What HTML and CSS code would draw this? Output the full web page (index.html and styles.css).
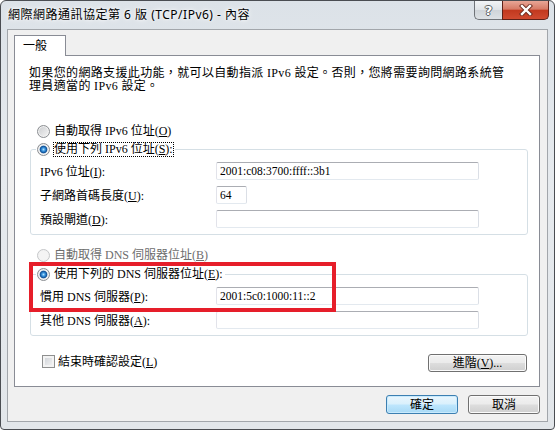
FILE: index.html
```html
<!DOCTYPE html>
<html lang="zh-Hant">
<head>
  <meta charset="UTF-8">
  <title>網際網路通訊協定第 6 版 (TCP/IPv6) - 內容</title>
  <link rel="stylesheet" href="styles.css">
</head>
<body>

  <div class="window">
    <div class="titlebar">
      <div class="title">網際網路通訊協定第 6 版 (TCP/IPv6) - 內容</div>
      <div class="caption-btns">
        <div class="cap-btn help">?</div>
        <div class="cap-btn close">
          <svg width="16" height="12" viewBox="0 0 16 12">
            <path d="M4 2 L12 10 M12 2 L4 10" stroke="#6b2a1e" stroke-width="4.2" stroke-linecap="square"/>
            <path d="M4 2 L12 10 M12 2 L4 10" stroke="#fff" stroke-width="2.4" stroke-linecap="square"/>
          </svg>
        </div>
      </div>
    </div>

    <div class="client">
      <div class="tabs">
        <div class="tab active">一般</div>
      </div>

      <div class="panel">
        <p class="intro">如果您的網路支援此功能，就可以自動指派 IPv6 設定。否則，您將需要詢問網路系統管<br>理員適當的 IPv6 設定。</p>

        <div class="option first">
          <span class="radio"></span>
          <span>自動取得 IPv6 位址(<u>O</u>)</span>
        </div>

        <fieldset class="group">
          <legend class="option">
            <span class="radio on"></span>
            <span class="focus">使用下列 IPv6 位址(<u>S</u>):</span>
          </legend>
          <div class="field-row">
            <span class="field-label">IPv6 位址(<u>I</u>):</span>
            <span class="textbox">2001:c08:3700:ffff::3b1</span>
          </div>
          <div class="field-row">
            <span class="field-label">子網路首碼長度(<u>U</u>):</span>
            <span class="textbox short">64</span>
          </div>
          <div class="field-row">
            <span class="field-label">預設閘道(<u>D</u>):</span>
            <span class="textbox"></span>
          </div>
        </fieldset>

        <div class="option disabled">
          <span class="radio off"></span>
          <span>自動取得 DNS 伺服器位址(<u>B</u>)</span>
        </div>

        <fieldset class="group dns">
          <legend class="option">
            <span class="radio on"></span>
            <span>使用下列的 DNS 伺服器位址(<u>E</u>):</span>
          </legend>
          <div class="field-row">
            <span class="field-label">慣用 DNS 伺服器(<u>P</u>):</span>
            <span class="textbox">2001:5c0:1000:11::2</span>
          </div>
          <div class="field-row">
            <span class="field-label">其他 DNS 伺服器(<u>A</u>):</span>
            <span class="textbox"></span>
          </div>
        </fieldset>

        <div class="panel-footer">
          <div class="check-row">
            <span class="checkbox"></span>
            <span>結束時確認設定(<u>L</u>)</span>
          </div>
          <button class="btn advanced">進階(<u>V</u>)...</button>
        </div>

        <div class="highlight"></div>
      </div>

      <div class="dialog-btns">
        <button class="btn default">確定</button>
        <button class="btn">取消</button>
      </div>
    </div>
  </div>

</body>
</html>
```

FILE: styles.css
```css
body {
  margin: 0;
  font-family: 'Liberation Serif', 'Noto Sans CJK TC', serif;
  font-size: 12px;
  color: #000;
  background: #fff;
}

.window {
  width: 555px;
  height: 430px;
  box-sizing: border-box;
  border: 1px solid #4a4d52;
  border-radius: 6px 6px 4px 4px;
  background: linear-gradient(to bottom, #dce2e8, #e6eaee 40%, #e2e6ea);
  display: flex;
  flex-direction: column;
  overflow: hidden;
}

.titlebar {
  height: 28px;
  display: flex;
  align-items: flex-start;
}

.title {
  font-family: 'Noto Sans', 'Noto Sans CJK TC', sans-serif;
  font-size: 12px;
  line-height: 14px;
  letter-spacing: 0.5px;
  margin: 7px 0 0 7px;
  text-shadow: 0 0 6px #fff, 0 0 3px #fff;
}

.caption-btns {
  margin-left: auto;
  margin-right: 5px;
  display: flex;
}

.cap-btn {
  height: 19px;
  box-sizing: border-box;
  display: flex;
  align-items: center;
  justify-content: center;
}

.help {
  width: 28px;
  border: 1px solid #6f7378;
  border-top: none;
  border-right: none;
  border-radius: 0 0 0 5px;
  background: linear-gradient(to bottom, #f2f4f6, #dfe3e7 48%, #cfd4d9 52%, #dde1e5);
  font-family: 'DejaVu Sans', sans-serif;
  font-weight: bold;
  font-size: 13px;
  color: #fff;
  text-shadow: 1px 0 0 #5b5f63, -1px 0 0 #5b5f63, 0 1px 0 #5b5f63, 0 -1px 0 #5b5f63;
}

.close {
  width: 47px;
  border: 1px solid #5e2118;
  border-top: none;
  border-radius: 0 0 5px 0;
  background: linear-gradient(to bottom, #e8a696, #d67a66 45%, #c2391f 52%, #d04a30);
}

.client {
  flex: 1;
  margin: 0 6px 7px 6px;
  border: 1px solid #a2a6ab;
  background: #f0f0f0;
  padding: 5px 7px 6px 6px;
  display: flex;
  flex-direction: column;
}

.tabs {
  display: flex;
}

.tab {
  height: 21px;
  box-sizing: border-box;
  border: 1px solid #898c95;
  border-bottom: none;
  background: #fff;
  padding: 0 18px 0 8px;
  line-height: 20px;
  margin-bottom: -1px;
  position: relative;
  z-index: 1;
}

.panel {
  height: 332px;
  box-sizing: border-box;
  border: 1px solid #898c95;
  background: #fff;
  position: relative;
  display: flex;
  flex-direction: column;
}

.intro {
  margin: 11px 0 0 14px;
  line-height: 13px;
  letter-spacing: 0.35px;
}

.option {
  display: flex;
  align-items: center;
  gap: 4px;
  height: 16px;
  line-height: 16px;
}

.option.first {
  margin: 30px 0 0 22px;
}

.option.disabled {
  margin: 12px 0 0 22px;
  color: #6d6d6d;
}

.radio {
  width: 13px;
  height: 13px;
  box-sizing: border-box;
  border-radius: 50%;
  border: 1px solid #8b8e92;
  background: linear-gradient(135deg, #c9cbce, #f6f6f6);
  box-shadow: inset 0 0 0 1px #f2f2f2;
  flex-shrink: 0;
}

.radio.on {
  background: radial-gradient(circle, #b4e2fb 0, #3b97e2 1.6px, #0f4f94 3.4px, #eef0f2 4.3px, #e2e4e6 5px, #cdd0d3 6px);
}

.radio.off {
  border-color: #c4c6c8;
  background: #f4f4f4;
}

.focus {
  outline: 1px dotted #000;
  outline-offset: 0;
  line-height: 13px;
}

.group {
  margin: 2px 11px 0 15px;
  padding: 5px 0 6px 5px;
  border: 1px solid #d5dfe5;
  border-radius: 3px;
  display: flex;
  flex-direction: column;
  gap: 6px;
}

.group.dns {
  margin-top: 3px;
}

.group legend {
  padding: 0 2px 0 1px;
  background: #fff;
}

.field-row {
  display: flex;
  align-items: center;
  height: 18px;
  padding-left: 4px;
}

.field-label {
  width: 176px;
}

.textbox {
  width: 263px;
  height: 18px;
  box-sizing: border-box;
  border: 1px solid;
  border-color: #abadb3 #dbdfe6 #e3e9ef #e2e3ea;
  border-radius: 2px;
  padding-left: 3px;
  font-size: 11.5px;
  line-height: 16px;
}

.textbox.short {
  width: 31px;
}

.panel-footer {
  display: flex;
  justify-content: space-between;
  align-items: flex-start;
  margin-top: 18px;
}

.check-row {
  display: flex;
  align-items: center;
  gap: 3px;
  margin-left: 27px;
  height: 14px;
}

.checkbox {
  width: 13px;
  height: 13px;
  box-sizing: border-box;
  border: 1px solid #8e8f8f;
  background: linear-gradient(135deg, #cbcfd4, #f7f7f7);
  box-shadow: inset 0 0 0 2px #f3f3f3;
}

.btn {
  font-family: 'Liberation Serif', 'Noto Sans CJK TC', serif;
  font-size: 12px;
  color: #000;
  height: 19px;
  width: 72px;
  box-sizing: border-box;
  border: 1px solid #707070;
  border-radius: 3px;
  background: linear-gradient(to bottom, #f2f2f2, #ebebeb 48%, #dddddd 52%, #cfcfcf);
  box-shadow: inset 0 0 0 1px #fbfbfb;
  padding: 0;
  line-height: 16px;
}

.btn.advanced {
  width: 99px;
  height: 18px;
  margin-right: 12px;
}

.btn.default {
  border-color: #3c7fb1;
  background: linear-gradient(to bottom, #eaf6fd, #d9f0fc 48%, #bee6fd 52%, #a7d9f5);
  box-shadow: inset 0 0 0 1px #c8eafd;
}

.dialog-btns {
  display: flex;
  justify-content: flex-end;
  gap: 10px;
  margin-top: 8px;
}

.highlight {
  position: absolute;
  left: 14px;
  top: 206px;
  width: 307px;
  height: 50px;
  box-sizing: border-box;
  border: 4px solid #e61e2a;
}
```
